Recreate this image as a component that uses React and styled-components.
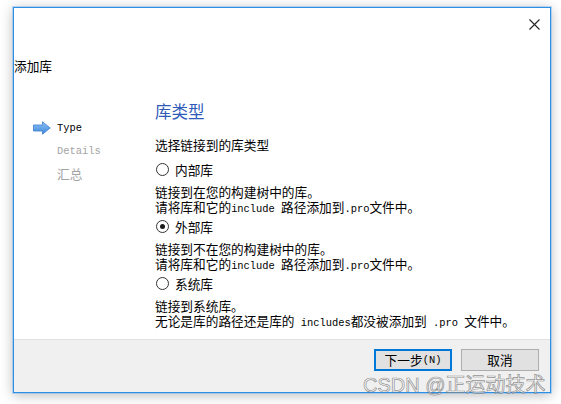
import React, { useState } from "react";
import styled, { createGlobalStyle } from "styled-components";

const GlobalStyle = createGlobalStyle`
  html, body {
    margin: 0;
    padding: 0;
    background: #ffffff;
  }
  body {
    font-family: "Noto Sans CJK SC", "Liberation Sans", sans-serif;
    color: #000;
  }
`;

const Page = styled.div`
  position: relative;
  width: 561px;
  height: 404px;
  overflow: hidden;
  padding: 7px 0 0 13px;
  box-sizing: border-box;
`;

const Window = styled.div`
  width: 538px;
  height: 386px;
  box-sizing: border-box;
  border: 1px solid #2b8fe6;
  box-shadow: 0 0 0 1px rgba(120, 180, 240, 0.45), 0 2px 12px rgba(0, 0, 0, 0.28);
  background: #fff;
  display: flex;
  flex-direction: column;
`;

const TopBar = styled.div`
  height: 32px;
  display: flex;
  justify-content: flex-end;
`;

const CloseButton = styled.button`
  width: 32px;
  height: 32px;
  border: none;
  background: transparent;
  padding: 0;
  display: flex;
  align-items: center;
  justify-content: center;
  cursor: pointer;
`;

const Title = styled.div`
  margin-top: 18px;
  font-size: 12.7px;
  line-height: 16px;
  height: 16px;
`;

const Main = styled.div`
  flex: 1;
  display: flex;
`;

const Nav = styled.div`
  width: 122px;
  padding: 42px 0 0 19px;
  display: flex;
  flex-direction: column;
`;

const NavItem = styled.div`
  height: 23px;
  display: flex;
  align-items: center;
  gap: 6px;
  color: ${(p) => (p.$active ? "#000" : "#a3a3a3")};
`;

const NavMark = styled.div`
  width: 18px;
  height: 14px;
  display: flex;
  align-items: center;
`;

const NavText = styled.span`
  font-family: ${(p) => (p.$cjk ? '"Noto Sans CJK SC", sans-serif' : '"Liberation Mono", monospace')};
  font-size: ${(p) => (p.$cjk ? "12.7px" : "10.4px")};
`;

const Content = styled.div`
  padding-top: 26px;
  display: flex;
  flex-direction: column;
`;

const Heading = styled.div`
  font-size: 16.5px;
  line-height: 22px;
  color: #2f5ab8;
`;

const Prompt = styled.div`
  margin-top: 15px;
  font-size: 12.7px;
  line-height: 16px;
  margin-bottom: 7px;
`;

const Group = styled.div`
  display: flex;
  flex-direction: column;
  margin-bottom: 3px;
`;

const RadioRow = styled.label`
  height: 18px;
  display: flex;
  align-items: center;
  gap: 6px;
  font-size: 12.7px;
  cursor: pointer;
`;

const RadioCircle = styled.span`
  width: 11px;
  height: 11px;
  border: 1px solid #333;
  border-radius: 50%;
  background: #fff;
  display: flex;
  align-items: center;
  justify-content: center;
  margin-left: 1px;

  &::after {
    content: "";
    width: 5px;
    height: 5px;
    border-radius: 50%;
    background: ${(p) => (p.$checked ? "#1a1a1a" : "transparent")};
  }
`;

const Desc = styled.div`
  margin-top: 6px;
  font-size: 12.7px;
  white-space: pre;
`;

const DescLine = styled.div`
  height: 15px;
  line-height: 15px;
`;

const Mono = styled.span`
  font-family: "Liberation Mono", monospace;
  font-size: 10.4px;
  line-height: 1;
`;

const Footer = styled.div`
  height: 43px;
  border-top: 1px solid #dfdfdf;
  background: #f0f0f0;
  display: flex;
  justify-content: flex-end;
  align-items: flex-start;
  gap: 9px;
  padding: 9px 11px 0 0;
`;

const Button = styled.button`
  width: 78px;
  height: 22px;
  box-sizing: border-box;
  background: #e1e1e1;
  border: ${(p) => (p.$primary ? "2px solid #0078d7" : "1px solid #adadad")};
  font-family: "Noto Sans CJK SC", sans-serif;
  font-size: 12.7px;
  color: #000;
  padding: 0;
  display: flex;
  align-items: center;
  justify-content: center;
  line-height: 1;
`;

const Watermark = styled.div`
  position: absolute;
  left: 363px;
  top: 369px;
  font-family: "Liberation Sans", "Noto Sans CJK SC", sans-serif;
  font-size: 20px;
  color: rgba(255, 255, 255, 0.55);
  -webkit-text-stroke: 0.7px rgba(110, 110, 110, 0.75);
  white-space: nowrap;
  pointer-events: none;
`;

const CloseIcon = () => (
  <svg width="11" height="11" viewBox="0 0 11 11">
    <path d="M0.5 0.5 L10.5 10.5 M10.5 0.5 L0.5 10.5" stroke="#222" strokeWidth="1.1" fill="none" />
  </svg>
);

const ArrowIcon = () => (
  <svg width="18" height="14" viewBox="0 0 18 14">
    <defs>
      <linearGradient id="arr" x1="0" y1="0" x2="0" y2="1">
        <stop offset="0" stopColor="#8fc4f5" />
        <stop offset="1" stopColor="#3d86da" />
      </linearGradient>
    </defs>
    <path d="M0.5 4 H9.5 V0.8 L17.2 7 L9.5 13.2 V10 H0.5 Z" fill="url(#arr)" stroke="#3f7fcf" strokeWidth="0.8" />
  </svg>
);

const options = [
  {
    label: "内部库",
    lines: [
      ["链接到在您的构建树中的库。"],
      ["请将库和它的", { m: "include " }, "路径添加到", { m: ".pro" }, "文件中。"],
    ],
  },
  {
    label: "外部库",
    lines: [
      ["链接到不在您的构建树中的库。"],
      ["请将库和它的", { m: "include " }, "路径添加到", { m: ".pro" }, "文件中。"],
    ],
  },
  {
    label: "系统库",
    lines: [
      ["链接到系统库。"],
      ["无论是库的路径还是库的", { m: " includes" }, "都没被添加到", { m: " .pro " }, "文件中。"],
    ],
  },
];

export default function App() {
  const [selected, setSelected] = useState(1);

  return (
    <Page>
      <GlobalStyle />
      <Window>
        <TopBar>
          <CloseButton>
            <CloseIcon />
          </CloseButton>
        </TopBar>
        <Title>添加库</Title>
        <Main>
          <Nav>
            <NavItem $active>
              <NavMark>
                <ArrowIcon />
              </NavMark>
              <NavText>Type</NavText>
            </NavItem>
            <NavItem>
              <NavMark />
              <NavText>Details</NavText>
            </NavItem>
            <NavItem>
              <NavMark />
              <NavText $cjk>汇总</NavText>
            </NavItem>
          </Nav>
          <Content>
            <Heading>库类型</Heading>
            <Prompt>选择链接到的库类型</Prompt>
            {options.map((opt, i) => (
              <Group key={opt.label}>
                <RadioRow onClick={() => setSelected(i)}>
                  <RadioCircle $checked={selected === i} />
                  {opt.label}
                </RadioRow>
                <Desc>
                  {opt.lines.map((line, j) => (
                    <DescLine key={j}>
                      {line.map((part, k) =>
                        typeof part === "string" ? part : <Mono key={k}>{part.m}</Mono>
                      )}
                    </DescLine>
                  ))}
                </Desc>
              </Group>
            ))}
          </Content>
        </Main>
        <Footer>
          <Button $primary>
            下一步<Mono>(N)</Mono>
          </Button>
          <Button>取消</Button>
        </Footer>
      </Window>
      <Watermark>CSDN @正运动技术</Watermark>
    </Page>
  );
}
